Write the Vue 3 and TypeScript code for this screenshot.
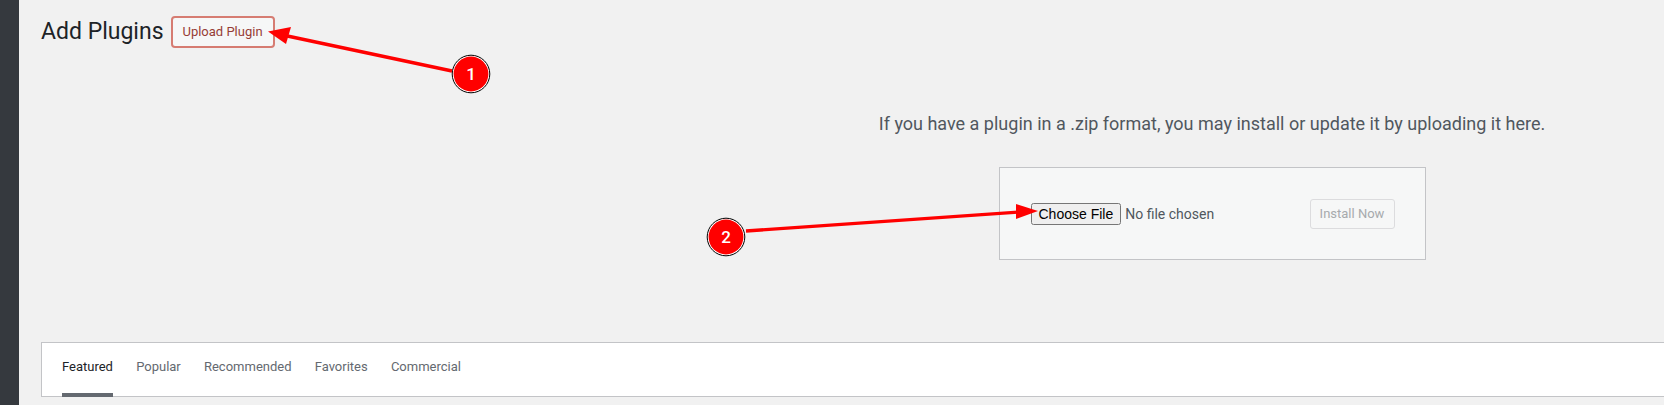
<script setup lang="ts">
const tabs: string[] = ['Featured', 'Popular', 'Recommended', 'Favorites', 'Commercial']
</script>

<template>
  <div class="page">
    <aside class="sidebar"></aside>
    <main class="main">
      <header class="head">
        <h1 class="title">Add Plugins</h1>
        <button class="upload" type="button">Upload Plugin</button>
      </header>
      <section class="uploader">
        <p class="hint">If you have a plugin in a .zip format, you may install or update it by uploading it here.</p>
        <form class="box" @submit.prevent>
          <input class="file" type="file" />
          <button class="install" type="button" disabled>Install Now</button>
        </form>
      </section>
      <nav class="tabs">
        <a v-for="(t, i) in tabs" :key="t" class="tab" :class="{ on: i === 0 }">{{ t }}</a>
      </nav>
    </main>
    <svg class="marks" width="1664" height="405" viewBox="0 0 1664 405">
      <line x1="452" y1="71" x2="285" y2="35.5" stroke="#ff0000" stroke-width="3.4" />
      <polygon points="268,31.5 291,27 286,44" fill="#ff0000" />
      <circle cx="471" cy="74" r="18.8" fill="#ffffff" stroke="#000000" stroke-width="1" />
      <circle cx="471" cy="74" r="17.4" fill="#ff0000" />
      <text x="471" y="80" class="num">1</text>
      <line x1="746" y1="231" x2="1020" y2="212" stroke="#ff0000" stroke-width="3.4" />
      <polygon points="1038,211 1016,204 1016,219" fill="#ff0000" />
      <circle cx="726" cy="237" r="18.8" fill="#ffffff" stroke="#000000" stroke-width="1" />
      <circle cx="726" cy="237" r="17.4" fill="#ff0000" />
      <text x="726" y="243" class="num">2</text>
    </svg>
  </div>
</template>

<style scoped>
.page {
  position: relative;
  display: flex;
  width: 1664px;
  height: 405px;
  overflow: hidden;
  background: #f1f1f1;
  font-family: Roboto, "Liberation Sans", sans-serif;
}
.sidebar {
  flex: 0 0 19px;
  background: #35393e;
}
.main {
  flex: 1;
  min-width: 0;
  padding: 16px 0 0 22px;
}
.head {
  display: flex;
  align-items: center;
  gap: 7px;
}
.title {
  margin: 0;
  font-size: 23px;
  font-weight: 400;
  line-height: 32px;
  color: #1d2327;
}
.upload {
  box-sizing: border-box;
  width: 104px;
  height: 32px;
  padding: 0 0 2px;
  border: 2px solid #d67c72;
  border-radius: 4px;
  background: #f6f7f7;
  color: #963d36;
  font: 400 13px/1 Roboto, "Liberation Sans", sans-serif;
}
.uploader {
  display: flex;
  flex-direction: column;
  align-items: center;
  width: 664px;
  margin: 62px 0 0 839px;
}
.hint {
  margin: 0;
  white-space: nowrap;
  font-size: 18px;
  line-height: 27px;
  color: #50575e;
}
.box {
  box-sizing: border-box;
  display: flex;
  align-items: center;
  justify-content: space-between;
  flex: none;
  width: 427px;
  height: 93px;
  margin-top: 30px;
  padding: 0 30px 0 31px;
  border: 1px solid #c3c4c7;
  background: #f6f7f7;
}
.file {
  width: 260px;
  font: 400 14px Roboto, "Liberation Sans", sans-serif;
  color: #50575e;
}
.file::file-selector-button {
  height: 22px;
  padding: 1px 6px;
  color: #000;
}
.install {
  box-sizing: border-box;
  width: 85px;
  height: 30px;
  padding: 0;
  border: 1px solid #dcdcde;
  border-radius: 3px;
  background: #f6f7f7;
  color: #a7aaad;
  font: 400 13px/1 Roboto, "Liberation Sans", sans-serif;
}
.tabs {
  box-sizing: border-box;
  display: flex;
  gap: 23.2px;
  height: 55px;
  margin: 82px -2px 0 0;
  padding: 0 0 0 20px;
  border: 1px solid #c3c4c7;
  background: #fff;
}
.tab {
  box-sizing: border-box;
  height: 54px;
  padding-top: 15px;
  border-bottom: 4px solid transparent;
  font-size: 13px;
  line-height: 17px;
  color: #646970;
}
.tab.on {
  border-bottom-color: #646970;
  color: #1d2327;
}
.marks {
  position: absolute;
  top: 0;
  left: 0;
  pointer-events: none;
}
.num {
  font: 500 17px Roboto, "Liberation Sans", sans-serif;
  fill: #ffffff;
  text-anchor: middle;
}
</style>
